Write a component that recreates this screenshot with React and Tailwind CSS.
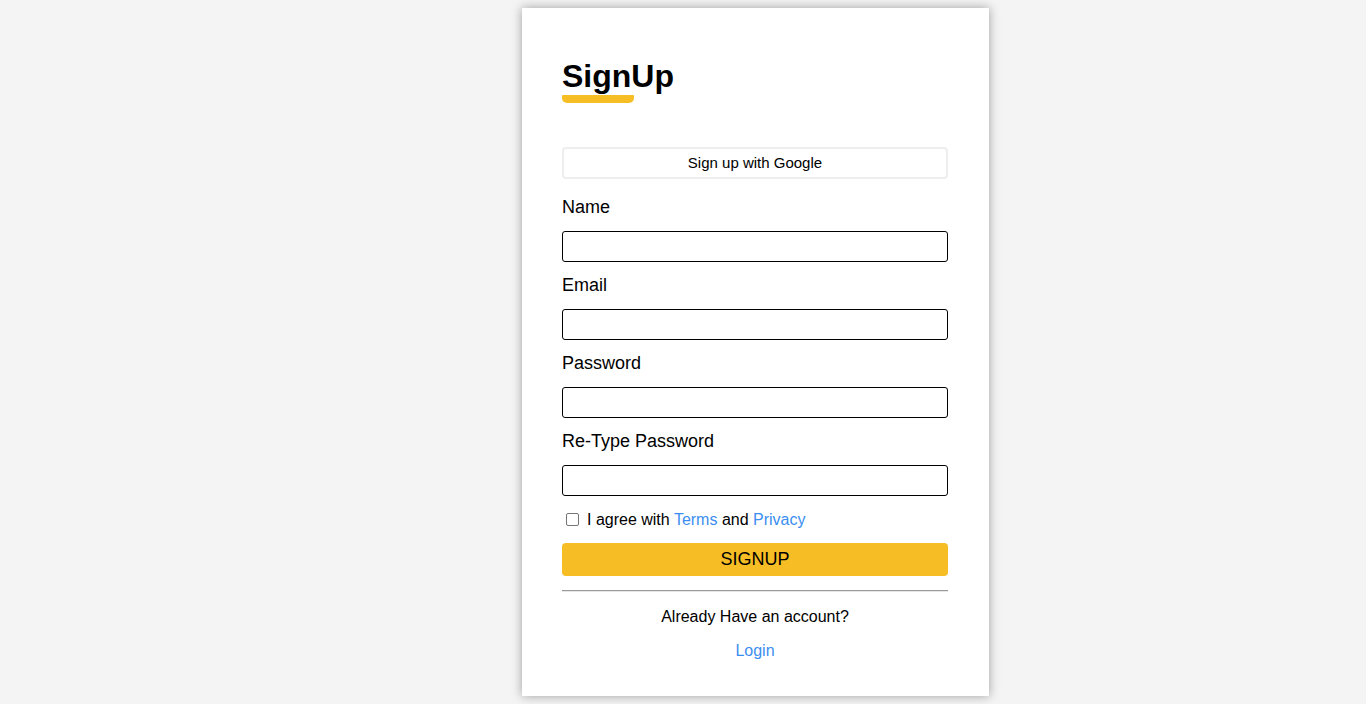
import React from "react";

function Field({ label }) {
  return (
    <div className="flex flex-col">
      <label className="block text-[18px] leading-[21px] mb-[13px]">{label}</label>
      <input className="block w-[386px] h-[31px] border border-black rounded-[3px] bg-white outline-none px-2" />
    </div>
  );
}

export default function App() {
  return (
    <div className="min-h-[704px] w-full bg-[#f4f4f4] pt-[8px] pb-[8px] font-['Liberation_Sans',Arial,sans-serif] text-black">
      <div className="ml-[522px] w-[467px] h-[688px] bg-white shadow-[0_0_10px_rgba(0,0,0,0.35)] px-[40px] pt-[50px] flex flex-col">
        <h1 className="text-[32px] font-bold leading-[36px] m-0 h-[36px]">SignUp</h1>
        <div className="mt-[1px] w-[72px] h-[8px] bg-[#f6be24] rounded-b-[5px] rounded-t-[1px]" />
        <button className="mt-[44px] w-[386px] h-[32px] border-2 border-[#eeeeee] rounded-[4px] bg-white text-[15px] leading-[28px] text-black">
          Sign up with Google
        </button>
        <div className="mt-[18px] flex flex-col gap-[13px]">
          <Field label="Name" />
          <Field label="Email" />
          <Field label="Password" />
          <Field label="Re-Type Password" />
        </div>
        <div className="mt-[15px] flex items-center h-[18px] text-[16px] leading-[18px]">
          <input type="checkbox" className="w-[13px] h-[13px] ml-[4px] mr-[8px] -mt-[1px] appearance-none border border-[#767676] rounded-[2px] bg-white" />
          <span>
            I agree with <a className="text-[#3b8ef0]">Terms</a> and <a className="text-[#3b8ef0]">Privacy</a>
          </span>
        </div>
        <button className="mt-[14px] w-[386px] h-[33px] bg-[#f6be24] rounded-[4px] text-[18px] leading-[33px] text-black">
          SIGNUP
        </button>
        <div className="mt-[14px] w-[386px] border-t border-t-[#9a9a9a] border-b border-b-[#e6e6e6]" />
        <p className="mt-[16px] w-[386px] text-center text-[16px] leading-[18px]">Already Have an account?</p>
        <p className="mt-[16px] w-[386px] text-center text-[16px] leading-[18px] text-[#3b8ef0]">Login</p>
      </div>
    </div>
  );
}
